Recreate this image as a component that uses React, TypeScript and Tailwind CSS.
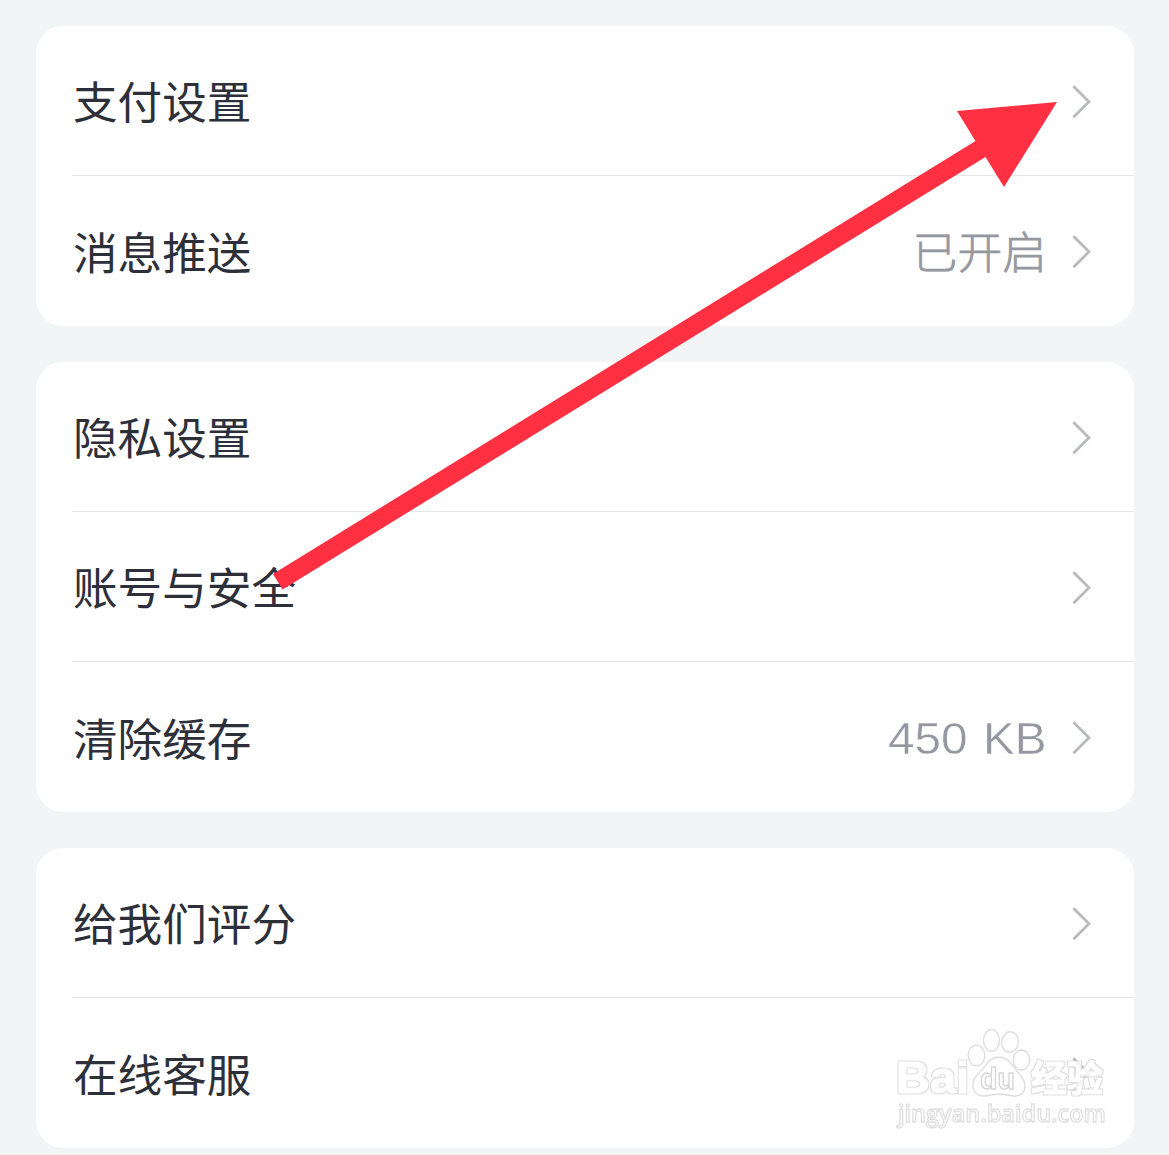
type Item = {
  label: string;
  value?: string;
  latin?: boolean;
};

const groups: Item[][] = [
  [{ label: "支付设置" }, { label: "消息推送", value: "已开启" }],
  [
    { label: "隐私设置" },
    { label: "账号与安全" },
    { label: "清除缓存", value: "450 KB", latin: true },
  ],
  [{ label: "给我们评分" }, { label: "在线客服" }],
];

function Chevron() {
  return (
    <svg
      className="mt-0.5"
      width="20"
      height="36"
      viewBox="0 0 20 36"
      fill="none"
    >
      <path d="M2.4 2.2 18 17.7 2.4 33.2" stroke="#b8b9bb" strokeWidth="2.7" />
    </svg>
  );
}

function Row({ item, last }: { item: Item; last: boolean }) {
  return (
    <li
      className={`ml-9 flex h-[150px] items-center justify-between pr-[43px] ${
        last ? "" : "border-b border-[#e6e7e9]"
      }`}
    >
      <span className="ml-px text-[44.6px] leading-none text-[#2d3039]">
        {item.label}
      </span>
      <div className="flex items-center gap-6">
        {item.value && (
          <span
            className={
              item.latin
                ? "mt-0.5 origin-right scale-x-[1.06] font-['Liberation_Sans'] text-[45px] leading-none text-[#9698a1] [-webkit-text-stroke:0.4px_white] [word-spacing:2px]"
                : "mb-0.5 text-[44.8px] leading-none font-light text-[#9698a1] [-webkit-text-stroke:0.7px_#9698a1]"
            }
          >
            {item.value}
          </span>
        )}
        <Chevron />
      </div>
    </li>
  );
}

// red pointer from the account row up to the payment row
function Arrow() {
  return (
    <svg
      className="pointer-events-none absolute top-0 left-0"
      width="1169"
      height="700"
      viewBox="0 0 1169 700"
    >
      <polygon
        points="1057,102 957,111 975.5,141 273,574 282.5,589.5 985.5,157 1004,187"
        fill="#ff3042"
      />
    </svg>
  );
}

function Watermark() {
  return (
    <svg
      className="pointer-events-none absolute top-[1020px] left-[885px] opacity-85"
      width="240"
      height="120"
      viewBox="0 0 240 120"
      fill="#ffffff"
      stroke="#d6d6d6"
      strokeWidth="1.3"
      strokeLinejoin="round"
    >
      <defs>
        <filter id="rim" x="-10%" y="-20%" width="120%" height="140%" colorInterpolationFilters="sRGB">
          <feMorphology in="SourceAlpha" operator="dilate" radius="1" result="wide" />
          <feFlood floodColor="#d9d9d9" />
          <feComposite in2="wide" operator="in" result="edge" />
          <feMerge>
            <feMergeNode in="edge" />
            <feMergeNode in="SourceGraphic" />
          </feMerge>
        </filter>
      </defs>
      <g fillOpacity="0.8">
        <ellipse cx="91.5" cy="35.5" rx="8.3" ry="10.3" />
        <ellipse cx="106.5" cy="20.5" rx="8" ry="10.8" />
        <ellipse cx="125" cy="22" rx="8.3" ry="10.3" transform="rotate(8 125 22)" />
        <ellipse cx="136.5" cy="40" rx="8.3" ry="10" />
        <path d="M114 37c-9 0-12 7-17 13-5 5-10 9-9 17 1 6 5 9 11 9 5 0 10-2 15-2s11 2 16 2c6 0 10-4 10-10 0-7-5-11-9-16-5-6-8-13-17-13Z" />
      </g>
      <text
        x="95"
        y="69"
        fontFamily="Liberation Sans"
        fontWeight="bold"
        fontSize="29"
        textLength="35"
        lengthAdjust="spacingAndGlyphs"
        stroke="#cecece"
      >
        du
      </text>
      {/* white lettering with a thin grey rim */}
      <g stroke="#ffffff" strokeWidth="1" filter="url(#rim)">
        <text
          x="11"
          y="73"
          fontFamily="Liberation Sans"
          fontWeight="bold"
          fontSize="45"
          textLength="73"
          lengthAdjust="spacingAndGlyphs"
        >
          Bai
        </text>
        <text
          x="146"
          y="72"
          fontFamily="Noto Sans CJK SC"
          fontWeight="bold"
          fontSize="36"
        >
          经验
        </text>
      </g>
      <text
        x="13"
        y="102"
        fontFamily="Open Sans"
        fontSize="24"
        fontWeight="600"
        textLength="208"
        lengthAdjust="spacingAndGlyphs"
        stroke="#dadada"
      >
        jingyan.baidu.com
      </text>
    </svg>
  );
}

export default function App() {
  return (
    <main className="relative h-[1155px] w-[1169px] overflow-hidden bg-[#f3f4f6] font-['Noto_Sans_CJK_SC',sans-serif]">
      <div className="flex flex-col gap-9 pt-[26px] pr-[35px] pl-9">
        {groups.map((items, index) => (
          <ul key={index} className="rounded-[27px] bg-white">
            {items.map((item, i) => (
              <Row
                key={item.label}
                item={item}
                last={i === items.length - 1}
              />
            ))}
          </ul>
        ))}
      </div>
      <Arrow />
      <Watermark />
    </main>
  );
}
